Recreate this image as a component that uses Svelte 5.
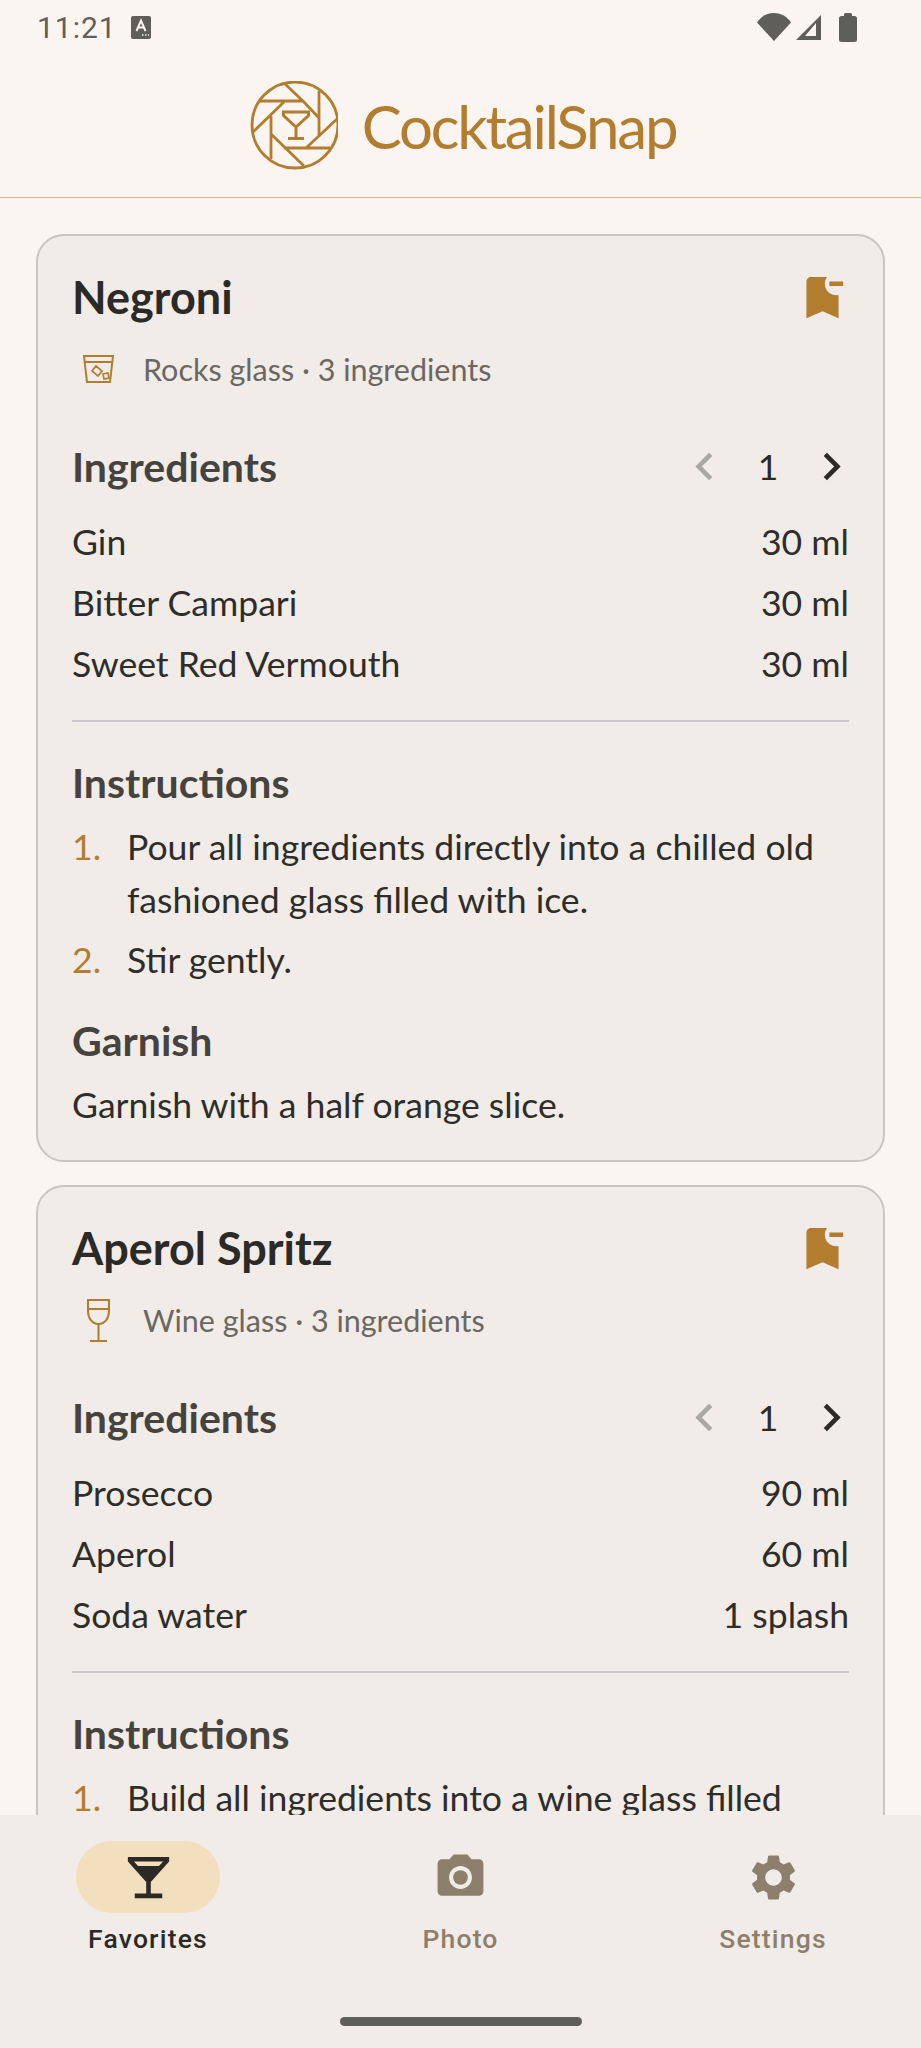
<script>
  const cocktails = [
    {
      name: 'Negroni',
      glass: 'rocks',
      meta: 'Rocks glass · 3 ingredients',
      ingredients: [
        ['Gin', '30 ml'],
        ['Bitter Campari', '30 ml'],
        ['Sweet Red Vermouth', '30 ml']
      ],
      steps: ['Pour all ingredients directly into a chilled old fashioned glass filled with ice.', 'Stir gently.'],
      garnish: 'Garnish with a half orange slice.'
    },
    {
      name: 'Aperol Spritz',
      glass: 'wine',
      meta: 'Wine glass · 3 ingredients',
      ingredients: [
        ['Prosecco', '90 ml'],
        ['Aperol', '60 ml'],
        ['Soda water', '1 splash']
      ],
      steps: ['Build all ingredients into a wine glass filled with ice.', 'Stir gently.'],
      garnish: 'Garnish with a slice of orange.'
    }
  ];
</script>

<div class="phone">
  <div class="status">
    <div class="status-left">
      <span class="time">11:21</span>
      <svg width="20" height="23" viewBox="0 0 20 23">
        <rect width="20" height="23" rx="2" fill="#5f5e5a" />
        <path d="M5.5 15 10 4.5 14.500 15M7.200 11.500h5.600" fill="none" stroke="#faf5f0" stroke-width="2" />
        <path d="M11 19h1.500M14 19h1.500M17 19h1" stroke="#faf5f0" stroke-width="1.500" />
      </svg>
    </div>
    <div class="status-right">
      <svg width="34" height="28" viewBox="0 0 34 28"><path d="M0 9.500C4 3.500 10 0 17 0s13 3.500 17 9.500L17 28z" fill="#5f5e5a" /></svg>
      <svg width="28" height="28" viewBox="0 0 28 28"><path d="M27 2v25H2zM22 10 11 23h11z" fill="#5f5e5a" fill-rule="evenodd" /></svg>
      <svg class="battery" width="18" height="29" viewBox="0 0 18 29"><path d="M5 3V1.500Q5 0 6.500 0h5Q13 0 13 1.500V3h2.500Q18 3 18 5.500v21q0 2.500-2.500 2.500h-13Q0 29 0 26.500v-21Q0 3 2.500 3z" fill="#5f5e5a" /></svg>
    </div>
  </div>

  <header class="brand">
    <svg class="logo" width="90" height="90" viewBox="17 12 90 90" fill="none" stroke="#b27d2f" stroke-width="2.800">
      <circle cx="64" cy="56" r="43" />
      <path d="M53 14 72 32H29M88 22V68M72 32 88 49M106 50 75 79H99M53 79H75M73 97 40 65M40 47V90M22 63 53 33" />
      <path d="M52.500 43h25v3.500L65 58 52.500 46.500zM65 58v11M57 69.500h16" stroke-width="3" />
    </svg>
    <span class="wordmark">CocktailSnap</span>
  </header>

  <main class="scroller">
    {#each cocktails as drink}
      <article class="card">
        <div class="title-row">
          <h2>{drink.name}</h2>
          <svg class="bookmark" width="55" height="55" viewBox="0 0 24 24" fill="#b27d2f">
            <path d="M21 7h-6V5h6v2zM19 10.900c-.32.07-.66.1-1 .1-2.760 0-5-2.240-5-5 0-1.130.37-2.160 1-3H7C5.900 3 5 3.900 5 5v16l7-3 7 3V10.900z" />
          </svg>
        </div>

        <div class="meta">
          <span class="glass" class:wine={drink.glass === 'wine'}>
            {#if drink.glass === 'rocks'}
              <svg width="31" height="28" viewBox="0 0 31 28" fill="none" stroke="#b27d2f" stroke-width="2">
                <path d="M1 1h29l-3 26H4zM2 7h27" />
                <path d="m13 11 6 5-4 5-6-5zM20 19l5-1 1 5-5 1z" stroke-width="1.700" />
              </svg>
            {:else}
              <svg width="23" height="43" viewBox="0 0 23 43" fill="none" stroke="#b27d2f" stroke-width="2">
                <path d="M1 1h21v11c0 7-4 13-10.500 13S1 19 1 12zM1 10h21" />
                <path d="M11.500 25v16M3 42h17" />
              </svg>
            {/if}
          </span>
          <span>{drink.meta}</span>
        </div>

        <div class="section-head">
          <h3>Ingredients</h3>
          <div class="stepper">
            <svg width="55" height="55" viewBox="0 0 24 24" fill="#aaa8a3"><path d="M15.410 7.410 14 6l-6 6 6 6 1.410-1.410L10.830 12z" /></svg>
            <span class="count">1</span>
            <svg width="55" height="55" viewBox="0 0 24 24" fill="#2b2a27"><path d="M10 6 8.590 7.410 13.170 12l-4.580 4.590L10 18l6-6z" /></svg>
          </div>
        </div>

        <div class="rows">
          {#each drink.ingredients as [label, amount]}
            <div class="row"><span>{label}</span><span>{amount}</span></div>
          {/each}
        </div>

        <hr />

        <h3 class="instructions">Instructions</h3>
        <ol>
          {#each drink.steps as step, i}
            <li><span class="num">{i + 1}.</span><span>{step}</span></li>
          {/each}
        </ol>

        <h3 class="garnish">Garnish</h3>
        <p>{drink.garnish}</p>
      </article>
    {/each}
  </main>

  <nav class="tabs">
    <div class="tab active">
      <span class="pill">
        <svg width="55" height="55" viewBox="0 0 24 24" fill="#2b2a27"><path d="M21 5V3H3v2l8 9v5H6v2h12v-2h-5v-5l8-9zM7.430 7 5.660 5h12.690l-1.780 2H7.430z" /></svg>
      </span>
      <span class="tab-label">Favorites</span>
    </div>
    <div class="tab">
      <span class="pill">
        <svg width="55" height="55" viewBox="0 0 24 24" fill="#8c7f6c"><circle cx="12" cy="12" r="3.200" /><path d="M9 2 7.170 4H4c-1.100 0-2 .9-2 2v12c0 1.100.9 2 2 2h16c1.100 0 2-.9 2-2V6c0-1.100-.9-2-2-2h-3.170L15 2H9zm3 15c-2.760 0-5-2.240-5-5s2.240-5 5-5 5 2.240 5 5-2.240 5-5 5z" /></svg>
      </span>
      <span class="tab-label">Photo</span>
    </div>
    <div class="tab">
      <span class="pill">
        <svg width="55" height="55" viewBox="0 0 24 24" fill="#8c7f6c"><path d="M19.140 12.940c.04-.3.06-.61.06-.94 0-.32-.02-.64-.07-.94l2.030-1.580c.18-.14.23-.41.12-.61l-1.920-3.320c-.12-.22-.37-.29-.59-.22l-2.390.96c-.5-.38-1.030-.7-1.620-.94l-.36-2.540c-.04-.24-.24-.41-.48-.41h-3.840c-.24 0-.43.17-.47.41l-.36 2.540c-.59.24-1.130.57-1.620.94l-2.390-.96c-.22-.08-.47 0-.59.22L2.740 8.870c-.12.21-.08.47.12.61l2.030 1.580c-.05.3-.09.63-.09.94s.02.64.07.94l-2.030 1.580c-.18.14-.23.41-.12.61l1.920 3.320c.12.22.37.29.59.22l2.390-.96c.5.38 1.030.7 1.620.94l.36 2.540c.05.24.24.41.48.41h3.840c.24 0 .44-.17.47-.41l.36-2.540c.59-.24 1.130-.56 1.620-.94l2.390.96c.22.08.47 0 .59-.22l1.920-3.320c.12-.22.07-.47-.12-.61l-2.010-1.580zM12 15.600c-1.980 0-3.600-1.620-3.600-3.600s1.620-3.600 3.600-3.600 3.600 1.620 3.600 3.600-1.620 3.600-3.600 3.600z" /></svg>
      </span>
      <span class="tab-label">Settings</span>
    </div>
    <div class="handle"></div>
  </nav>
</div>

<style>
  :global(body) {
    margin: 0;
    background: #faf5f0;
  }

  .phone {
    width: 921px;
    height: 2048px;
    display: flex;
    flex-direction: column;
    overflow: hidden;
    background: #faf5f0;
    font-family: Lato, 'Liberation Sans', sans-serif;
    color: #2f2d2a;
  }

  .status {
    height: 54px;
    flex: none;
    display: flex;
    justify-content: space-between;
    align-items: center;
    padding: 0 64px 0 37px;
    box-sizing: border-box;
  }

  .status-left {
    display: flex;
    align-items: center;
    gap: 14px;
  }

  .time {
    font-family: Roboto, sans-serif;
    font-size: 30px;
    letter-spacing: 1px;
    color: #5f5e5a;
  }

  .status-right {
    display: flex;
    align-items: center;
    gap: 3px;
  }

  .battery {
    margin-left: 14px;
  }

  .brand {
    height: 144px;
    flex: none;
    display: flex;
    align-items: center;
    justify-content: center;
    gap: 24px;
    padding-left: 3px;
    box-sizing: border-box;
    border-bottom: 1px solid #d2b988;
  }

  .wordmark {
    font-size: 60px;
    font-weight: 400;
    color: #b27d2f;
    letter-spacing: -2.200px;
  }

  .scroller {
    flex: 1;
    min-height: 0;
    overflow: hidden;
    padding: 36px 36px 0;
    display: flex;
    flex-direction: column;
    gap: 23px;
  }

  .card {
    flex: none;
    border: 2px solid #c9c5bf;
    border-radius: 28px;
    background: #f1ece7;
    padding: 31px 34px 29px;
  }

  .title-row {
    display: flex;
    justify-content: space-between;
    align-items: center;
    height: 60px;
  }

  h2 {
    margin: 0;
    font-size: 45px;
    font-weight: 700;
    color: #2b2a27;
  }

  .bookmark {
    margin-right: -1px;
  }

  .meta {
    display: flex;
    align-items: center;
    height: 40px;
    margin-top: 22px;
    font-size: 30.500px;
    color: #6b6762;
  }

  .glass {
    width: 71px;
    display: flex;
    justify-content: flex-start;
    padding-left: 11px;
    box-sizing: border-box;
  }

  .glass.wine {
    padding-left: 15px;
  }

  h3 {
    margin: 0;
    font-size: 41px;
    line-height: 50px;
    font-weight: 700;
    color: #46433f;
  }

  .section-head {
    display: flex;
    justify-content: space-between;
    align-items: center;
    height: 55px;
    margin-top: 50px;
  }

  .stepper {
    display: flex;
    align-items: center;
    margin-right: -10px;
  }

  .count {
    width: 40px;
    margin: 0 16px;
    text-align: center;
    font-size: 35.600px;
    color: #2b2a27;
  }

  .rows {
    margin-top: 17px;
  }

  .row {
    display: flex;
    justify-content: space-between;
    font-size: 35.600px;
    line-height: 61px;
  }

  hr {
    border: 0;
    height: 2px;
    margin: 26px 0 0;
    background: #cbc6ca;
  }

  .instructions {
    margin-top: 36px;
  }

  ol {
    list-style: none;
    margin: 12px 0 0;
    padding: 0;
    display: flex;
    flex-direction: column;
    gap: 7px;
  }

  li {
    display: flex;
    font-size: 35.600px;
    line-height: 53px;
  }

  .num {
    flex: none;
    width: 55px;
    color: #b27d2f;
  }

  .garnish {
    margin-top: 30px;
  }

  p {
    margin: 12px 0 0;
    font-size: 35.600px;
    line-height: 53px;
  }

  .tabs {
    position: relative;
    flex: none;
    height: 233px;
    display: grid;
    grid-template-columns: repeat(3, 312.500px);
    justify-content: center;
    background: #f1ece7;
    box-sizing: border-box;
    padding-top: 26px;
    align-items: start;
  }

  .tab {
    display: flex;
    flex-direction: column;
    align-items: center;
  }

  .pill {
    width: 144px;
    height: 72px;
    border-radius: 36px;
    display: flex;
    align-items: center;
    justify-content: center;
  }

  .active .pill {
    background: #f1dfbd;
  }

  .tab-label {
    margin-top: 8px;
    font-family: Roboto, sans-serif;
    font-size: 26.500px;
    line-height: 36px;
    font-weight: 500;
    letter-spacing: 1.200px;
    color: #8c7f6c;
  }

  .active .tab-label {
    color: #2b2a27;
  }

  .handle {
    position: absolute;
    left: 340px;
    bottom: 22px;
    width: 242px;
    height: 9px;
    border-radius: 5px;
    background: #5f5e5a;
  }
</style>
